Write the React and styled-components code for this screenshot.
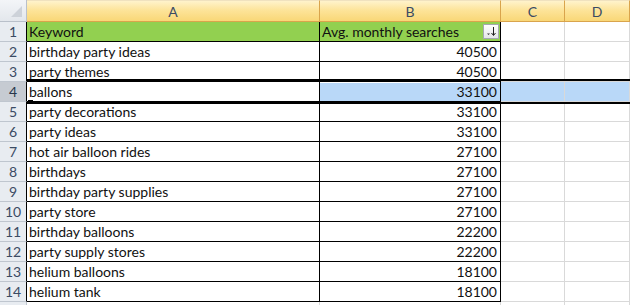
import React from "react";
import styled, { createGlobalStyle, css } from "styled-components";

const GlobalStyle = createGlobalStyle`
  html, body {
    margin: 0;
    padding: 0;
    background: #fff;
  }
  body {
    font-family: Lato, "Liberation Sans", sans-serif;
    overflow: hidden;
  }
`;

const rows = [
  ["birthday party ideas", 40500],
  ["party themes", 40500],
  ["ballons", 33100],
  ["party decorations", 33100],
  ["party ideas", 33100],
  ["hot air balloon rides", 27100],
  ["birthdays", 27100],
  ["birthday party supplies", 27100],
  ["party store", 27100],
  ["birthday balloons", 22200],
  ["party supply stores", 22200],
  ["helium balloons", 18100],
  ["helium tank", 18100],
];

const Sheet = styled.div`
  position: relative;
  display: grid;
  grid-template-columns: 27px 293px 181px 64px 65px 10px;
  grid-template-rows: 22px;
  grid-auto-rows: 20px;
  width: 630px;
  height: 305px;
  overflow: hidden;
  font-size: 14px;
  color: #111;
`;

const Corner = styled.div`
  position: relative;
  background: linear-gradient(#f3f5f8, #e3e7ec);
  border-right: 1px solid #b9c0ca;
  border-bottom: 1px solid #b9c0ca;
  &::after {
    content: "";
    position: absolute;
    right: 4px;
    bottom: 4px;
    width: 0;
    height: 0;
    border-left: 11px solid transparent;
    border-bottom: 11px solid #cdd2d9;
  }
`;

const ColHead = styled.div`
  display: flex;
  align-items: center;
  justify-content: center;
  padding-top: 1px;
  background: linear-gradient(#fff3cc 0%, #fde49a 45%, #f9d777 100%);
  border-top: 1px solid #f0e2bf;
  border-right: 1px solid #d9a44c;
  border-bottom: 1px solid #d9a44c;
  color: #3b4b64;
  font-size: 14px;
`;

const RowHead = styled.div`
  display: flex;
  align-items: center;
  justify-content: center;
  background: ${(p) => (p.$active ? "#c6cbd2" : "#e8ecf1")};
  color: ${(p) => (p.$active ? "#29374c" : "#3b4b64")};
  border-right: 1px solid ${(p) => (p.$edge ? "#000" : "#bfc6cf")};
  border-bottom: 1px solid #bfc6cf;
  font-size: 14px;
`;

const Cell = styled.div`
  display: flex;
  align-items: center;
  justify-content: ${(p) => (p.$num ? "flex-end" : "flex-start")};
  padding: 0 3px 1px 2px;
  white-space: nowrap;
  overflow: hidden;
  background: ${(p) => p.$fill || "#fff"};
  border-right: 1px solid ${(p) => (p.$table ? "#000" : "#d9d9d9")};
  border-bottom: 1px solid ${(p) => (p.$table ? "#000" : "#d9d9d9")};
  ${(p) =>
    p.$gapTop &&
    css`
      box-shadow: inset 0 1px 0 #fff;
    `}
`;

const HeaderCell = styled(Cell)`
  position: relative;
  background: #92d050;
  justify-content: flex-start;
`;

const FilterButton = styled.div`
  position: absolute;
  right: 1px;
  top: 2px;
  width: 14px;
  height: 13px;
  border: 1px solid #a4a9b0;
  background: linear-gradient(#ffffff, #e4e6e9);
  display: flex;
  align-items: center;
  justify-content: center;
`;

const Selection = styled.div`
  position: absolute;
  left: 27px;
  top: 79px;
  width: 603px;
  height: 21px;
  border-top: 2px solid #000;
  border-bottom: 2px solid #000;
  pointer-events: none;
`;

const Handle = styled.div`
  position: absolute;
  left: 28px;
  top: 100px;
  width: 5px;
  height: 3px;
  background: #000;
`;

const SortIcon = () => (
  <svg width="12" height="11" viewBox="0 0 12 11">
    <path d="M2 7.5h3l-1.5 1.5z" fill="#333" />
    <path d="M8.5 1v8" stroke="#222" strokeWidth="1" />
    <path d="M6.5 7l2 2.5 2-2.5" stroke="#222" strokeWidth="1" fill="none" />
  </svg>
);

const App = () => {
  const cols = ["A", "B", "C", "D"];
  return (
    <>
      <GlobalStyle />
      <Sheet>
        <Corner />
        {cols.map((c) => (
          <ColHead key={c}>{c}</ColHead>
        ))}
        <ColHead />

        <RowHead $edge>1</RowHead>
        <HeaderCell $table>Keyword</HeaderCell>
        <HeaderCell $table>
          Avg. monthly searches
          <FilterButton>
            <SortIcon />
          </FilterButton>
        </HeaderCell>
        <Cell />
        <Cell />
        <Cell />

        {rows.map(([kw, n], i) => {
          const active = i === 2;
          const blue = active ? "#b9d8f8" : undefined;
          return (
            <React.Fragment key={kw}>
              <RowHead $edge $active={active}>
                {i + 2}
              </RowHead>
              <Cell $table>{kw}</Cell>
              <Cell $table $num $fill={blue} $gapTop={active}>
                {n}
              </Cell>
              <Cell $fill={blue} />
              <Cell $fill={blue} />
              <Cell $fill={blue} />
            </React.Fragment>
          );
        })}

        <RowHead />
        <Cell />
        <Cell />
        <Cell />
        <Cell />
        <Cell />

        <Selection />
        <Handle />
      </Sheet>
    </>
  );
};

export default App;
